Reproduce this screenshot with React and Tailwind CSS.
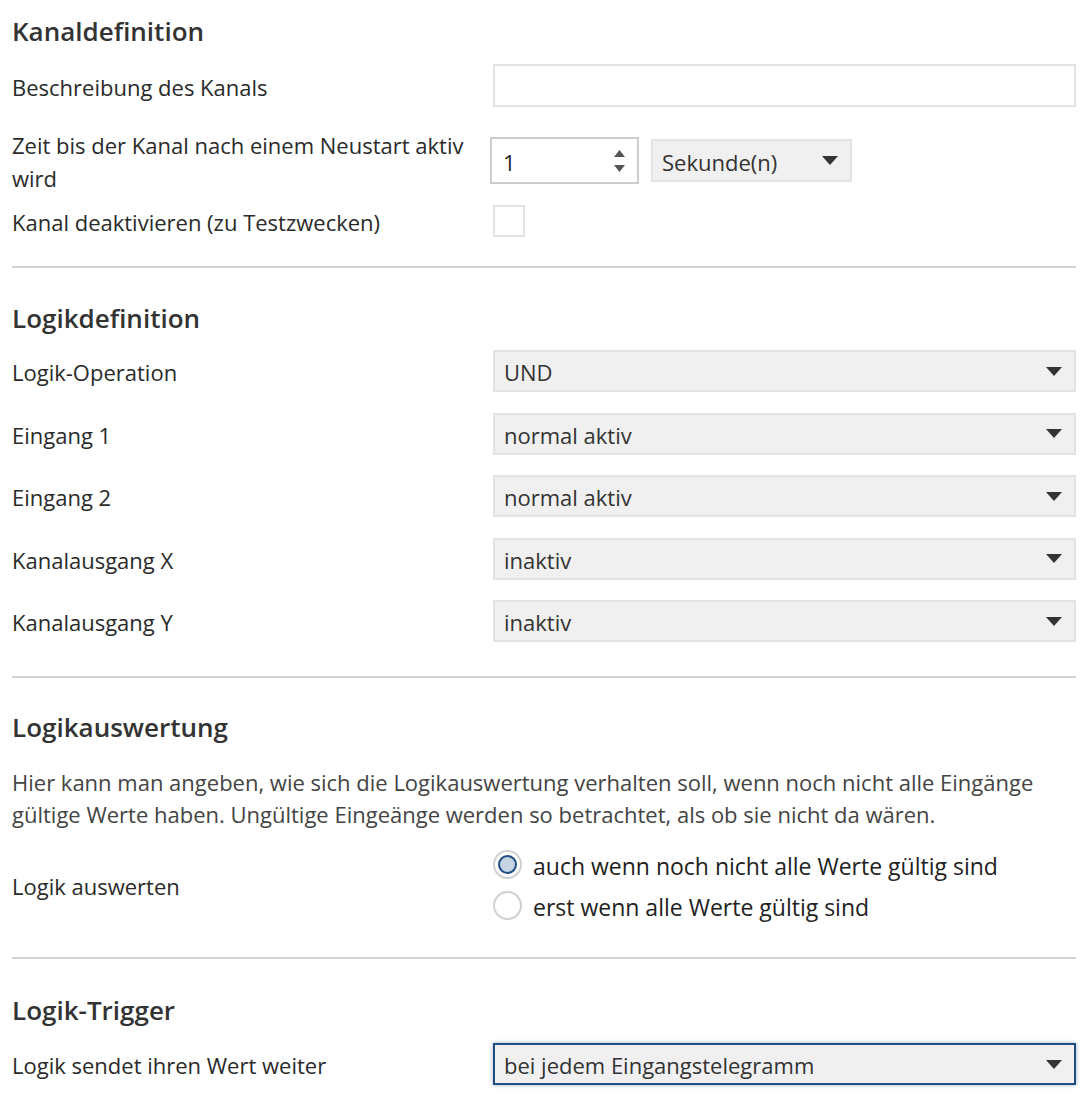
import React, { useState } from 'react';

const Caret = () => (
  <svg width="16" height="9" viewBox="0 0 16 9" className="shrink-0">
    <path d="M0 0 H16 L8 9 Z" fill="#333" />
  </svg>
);

const Select = ({ value, focused, className = '' }) => (
  <div
    className={`flex items-center justify-between h-[42px] pl-[9px] pr-[12px] bg-[#f0f0f0] text-[#333] ${
      focused
        ? 'border-2 border-[#1f4e85] shadow-[0_0_4px_rgba(31,78,133,0.45)]'
        : 'border-2 border-[#e3e3e3]'
    } ${className}`}
  >
    <span className="pt-[3px]">{value}</span>
    <Caret />
  </div>
);

const Heading = ({ children, className = '' }) => (
  <h2 className={`h-[40px] leading-[40px] text-[26px] font-semibold text-[#333] ${className}`}>{children}</h2>
);

const Divider = ({ className = '' }) => <div className={`h-[2px] bg-[#d2d2d2] ${className}`} />;

const Row = ({ label, children, className = '' }) => (
  <div className={`flex items-center ${className}`}>
    <div className="w-[481px] shrink-0 leading-[33px] pt-[3px] text-[#2a2a2a]">{label}</div>
    <div className="flex-1">{children}</div>
  </div>
);

export default function App() {
  const [evalMode, setEvalMode] = useState('always');
  const [disabled, setDisabled] = useState(false);

  const logicRows = [
    { label: 'Logik-Operation', value: 'UND' },
    { label: 'Eingang 1', value: 'normal aktiv' },
    { label: 'Eingang 2', value: 'normal aktiv' },
    { label: 'Kanalausgang X', value: 'inaktiv' },
    { label: 'Kanalausgang Y', value: 'inaktiv' }
  ];

  const radios = [
    { id: 'always', label: 'auch wenn noch nicht alle Werte gültig sind' },
    { id: 'valid', label: 'erst wenn alle Werte gültig sind' }
  ];

  return (
    <div className="min-h-screen bg-white pl-[12px] pr-[14px] text-[22px] font-['Open_Sans',sans-serif]">
      {/* Kanaldefinition */}
      <Heading className="pt-[11px] h-[52px]">Kanaldefinition</Heading>

      <Row label="Beschreibung des Kanals" className="mt-[12px]">
        <div className="h-[43px] border-2 border-[#e3e3e3] bg-white" />
      </Row>

      <Row
        label={
          <>
            Zeit bis der Kanal nach einem Neustart aktiv
            <br />
            wird
          </>
        }
        className="mt-[19px]"
      >
        <div className="flex items-center gap-[12px] -ml-[3px]">
          <div className="flex items-center justify-between w-[149px] h-[47px] border-2 border-[#cccccc] pl-[11px] pr-[12px] text-[#222]">
            <span className="pt-[3px]">1</span>
            <div className="flex flex-col gap-[8px]">
              <svg width="11" height="7" viewBox="0 0 11 7">
                <path d="M0 7 L5.5 0 L11 7 Z" fill="#555" />
              </svg>
              <svg width="11" height="7" viewBox="0 0 11 7">
                <path d="M0 0 H11 L5.5 7 Z" fill="#555" />
              </svg>
            </div>
          </div>
          <Select value="Sekunde(n)" className="w-[201px] h-[43px]" />
        </div>
      </Row>

      <Row label="Kanal deaktivieren (zu Testzwecken)" className="mt-[8px]">
        <button
          type="button"
          onClick={() => setDisabled(!disabled)}
          className="block w-[32px] h-[32px] border-2 border-[#e3e3e3] bg-white"
        />
      </Row>

      <Divider className="mt-[27px]" />

      {/* Logikdefinition */}
      <Heading className="mt-[30px]">Logikdefinition</Heading>

      <div className="mt-[12px] flex flex-col gap-[20.5px]">
        {logicRows.map((r) => (
          <Row key={r.label} label={r.label}>
            <Select value={r.value} />
          </Row>
        ))}
      </div>

      <Divider className="mt-[34px]" />

      {/* Logikauswertung */}
      <Heading className="mt-[29px]">Logikauswertung</Heading>

      <p className="mt-[19px] leading-[32px] text-[#444]">
        Hier kann man angeben, wie sich die Logikauswertung verhalten soll, wenn noch nicht alle Eingänge
        <br />
        gültige Werte haben. Ungültige Eingeänge werden so betrachtet, als ob sie nicht da wären.
      </p>

      <Row label="Logik auswerten" className="mt-[14px]">
        <div className="flex flex-col">
          {radios.map((r) => (
            <label key={r.id} className="flex items-center h-[41px] gap-[11px] text-[23px] text-[#222] cursor-pointer">
              <span
                className="flex items-center justify-center w-[29px] h-[29px] rounded-full border-2 border-[#d0d0d0] bg-white"
                onClick={() => setEvalMode(r.id)}
              >
                {evalMode === r.id && (
                  <span className="w-[19px] h-[19px] rounded-full border-2 border-[#1f4e85] bg-[#c5d3e3]" />
                )}
              </span>
              <span className="pt-[3px]">{r.label}</span>
            </label>
          ))}
        </div>
      </Row>

      <Divider className="mt-[31px]" />

      {/* Logik-Trigger */}
      <Heading className="mt-[31px]">Logik-Trigger</Heading>

      <Row label="Logik sendet ihren Wert weiter" className="mt-[13px] pb-[20px]">
        <Select value="bei jedem Eingangstelegramm" focused />
      </Row>
    </div>
  );
}
